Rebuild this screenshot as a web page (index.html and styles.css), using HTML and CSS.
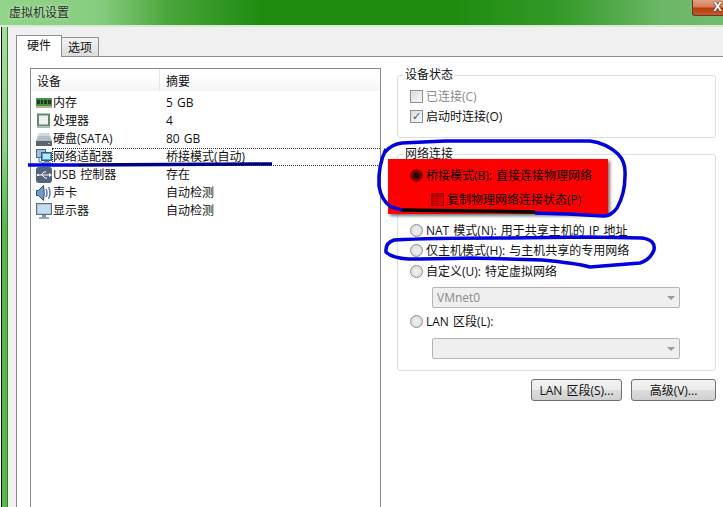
FILE: index.html
```html
<!DOCTYPE html>
<html lang="zh-CN">
<head>
  <meta charset="UTF-8" />
  <title>虚拟机设置</title>
  <link rel="stylesheet" href="styles.css">
</head>

<body>
  <div class="window">
    <div class="titlebar">
      <span class="title">虚拟机设置</span>
      <div class="close"><span>X</span></div>
    </div>

    <div class="frame">
      <div class="edge"></div>
      <div class="client">
        <div class="tabs">
          <div class="tab active">硬件</div>
          <div class="tab">选项</div>
        </div>

        <div class="panel">
          <div class="devices">
            <div class="devices-head">
              <div class="head-cell head-name">设备</div>
              <div class="head-cell">摘要</div>
            </div>

            <div class="row">
              <svg class="icon" viewBox="0 0 16 16">
                <rect x="0" y="3" width="16" height="8" fill="#4d8f4a"/>
                <rect x="1" y="5" width="3" height="4" fill="#1d3d1d"/>
                <rect x="5" y="5" width="2" height="4" fill="#1d3d1d"/>
                <rect x="8" y="5" width="3" height="4" fill="#1d3d1d"/>
                <rect x="12" y="5" width="3" height="4" fill="#1d3d1d"/>
                <rect x="0" y="11" width="16" height="2" fill="#b9b48a"/>
              </svg>
              <div class="row-body"><span class="name">内存</span><span>5 GB</span></div>
            </div>

            <div class="row">
              <svg class="icon" viewBox="0 0 16 16">
                <rect x="2" y="1.5" width="11" height="11" fill="#eef2ee" stroke="#5d8a70" stroke-width="2"/>
                <path d="M1 14.5h13" stroke="#a9b7ae"/>
              </svg>
              <div class="row-body"><span class="name">处理器</span><span>4</span></div>
            </div>

            <div class="row">
              <svg class="icon" viewBox="0 0 16 16">
                <path d="M3 2h10l3 8H0z" fill="#b4bcc4"/>
                <path d="M3 2h10l1 3H2z" fill="#d4d9de"/>
                <rect x="0" y="10" width="16" height="5" fill="#5c6670"/>
                <rect x="12" y="12" width="2" height="1" fill="#9fe08a"/>
              </svg>
              <div class="row-body"><span class="name">硬盘(SATA)</span><span>80 GB</span></div>
            </div>

            <div class="row selected">
              <svg class="icon" viewBox="0 0 16 16">
                <rect x="0.5" y="0.5" width="9" height="8" fill="#9fc0de" stroke="#4a6a8c"/>
                <path d="M3 9v4h3" stroke="#4a6a8c" fill="none"/>
                <rect x="5.5" y="3.5" width="10" height="8" fill="#35a6f0" stroke="#35597f"/>
                <rect x="7" y="5" width="7" height="5" fill="#bfe6ff"/>
                <rect x="8" y="12" width="5" height="1" fill="#5a7fa3"/>
                <rect x="6" y="13" width="9" height="2" fill="#8da8c0"/>
              </svg>
              <div class="row-body"><span class="name">网络适配器</span><span>桥接模式(自动)</span></div>
            </div>

            <div class="row">
              <svg class="icon" viewBox="0 0 16 16">
                <rect x="0" y="0" width="16" height="16" rx="3" fill="#53657c"/>
                <path d="M2 8h11M5 8l3-3h2M6 8l3 3h2" stroke="#fff" fill="none"/>
                <path d="M13 6l3 2-3 2z" fill="#fff"/>
                <rect x="1" y="7" width="2" height="2" fill="#fff"/>
              </svg>
              <div class="row-body"><span class="name">USB 控制器</span><span>存在</span></div>
            </div>

            <div class="row">
              <svg class="icon" viewBox="0 0 16 16">
                <path d="M0.5 5.5h2l5-5q1.500 7.500 0 15l-5-5h-2z" fill="#6f9ccb" stroke="#2f4f78"/>
                <path d="M10 4q2 4 0 8M12.500 2q3 6 0 12" stroke="#5f86b6" stroke-width="1.600" fill="none"/>
              </svg>
              <div class="row-body"><span class="name">声卡</span><span>自动检测</span></div>
            </div>

            <div class="row">
              <svg class="icon" viewBox="0 0 16 16">
                <rect x="0.5" y="0.5" width="15" height="11" fill="#a9c6dd" stroke="#5a6f84"/>
                <rect x="2" y="2" width="12" height="8" fill="#c6dcec"/>
                <rect x="6" y="12" width="4" height="2" fill="#7f8f9f"/>
                <rect x="3" y="14" width="10" height="2" fill="#9aa8b5"/>
              </svg>
              <div class="row-body"><span class="name">显示器</span><span>自动检测</span></div>
            </div>
          </div>

          <div class="side">
            <fieldset class="group group-status">
              <legend>设备状态</legend>
              <label class="option off"><span class="check"></span>已连接(C)</label>
              <label class="option"><span class="check checked">✓</span>启动时连接(O)</label>
            </fieldset>

            <fieldset class="group group-net">
              <legend>网络连接</legend>
              <div class="red-box">
                <label class="option"><span class="radio radio-on"></span>桥接模式(B): 直接连接物理网络</label>
                <label class="option option-sub"><span class="check check-red"></span>复制物理网络连接状态(P)</label>
              </div>
              <label class="option"><span class="radio"></span>NAT 模式(N): 用于共享主机的 IP 地址</label>
              <label class="option"><span class="radio"></span>仅主机模式(H): 与主机共享的专用网络</label>
              <label class="option option-custom"><span class="radio"></span>自定义(U): 特定虚拟网络</label>
              <div class="combo combo-net"><span>VMnet0</span><i class="arrow"></i></div>
              <label class="option option-lan"><span class="radio"></span>LAN 区段(L):</label>
              <div class="combo combo-lan"><span></span><i class="arrow"></i></div>
            </fieldset>

            <div class="buttons">
              <button class="btn btn-lan">LAN 区段(S)...</button>
              <button class="btn btn-adv">高级(V)...</button>
            </div>
          </div>
        </div>
      </div>
    </div>

    <!-- hand drawn marks on top of the screenshot -->
    <svg class="marks" viewBox="0 0 723 507">
      <path class="mark" d="M385 152Q392 144 402 143L445 141L590 141Q606 143 618 154Q626 162 625 176Q625 194 617 208Q611 216 604 216L568 214L535 213"/>
      <path class="mark" d="M386 149Q378 165 379 186Q381 200 391 207L402 210"/>
      <path class="mark-dark" d="M402 210L535 212"/>
      <path class="mark" d="M408 259Q392 258 386 252Q385 243 394 240Q430 238 500 238L590 237L642 238Q656 240 654 250Q650 260 640 263L590 267Q575 263 542 260L470 258Q430 259 408 259"/>
      <path class="mark-line" d="M28 165L78 165"/>
      <path class="mark-line mark-navy" d="M78 165L272 164"/>
    </svg>
  </div>
</body>
</html>
```

FILE: styles.css
```css
html, body {
  margin: 0;
  height: 100%;
  overflow: hidden;
  background-color: #fff;
  font-family: "Open Sans", "Noto Sans CJK SC", sans-serif;
  font-size: 12px;
  word-spacing: 1px;
  color: #111;
}

.window {
  position: relative;
  width: 723px;
  height: 507px;
  overflow: hidden;
  display: flex;
  flex-direction: column;
}

/* title bar */
.titlebar {
  height: 25px;
  flex: none;
  display: flex;
  justify-content: space-between;
  padding-left: 9px;
  background: linear-gradient(90deg, #93d48c 0, #86cc7e 100px, #4aa53a 170px, #1f8c10 260px, #1f8c10 455px, #349a28 560px, #6ab765 660px, #74ba6e 723px);
  border-bottom: 2px solid #d4ecd0;
}

.title {
  line-height: 25px;
  color: #25301f;
  text-shadow: 0 0 4px #d8f0d0;
}

.close {
  width: 31px;
  height: 16px;
  box-sizing: border-box;
  border: 1px solid #5e3a30;
  border-top: none;
  border-right: none;
  border-radius: 0 0 0 3px;
  background: linear-gradient(#e4a084 0, #d48058 45%, #b83c0c 55%, #c85a28 100%);
  text-align: right;
  padding-right: 1px;
}

.close span {
  display: block;
  font-family: "Liberation Sans", sans-serif;
  font-size: 13px;
  font-weight: bold;
  line-height: 14px;
  color: #fff;
  text-shadow: 0 0 1px #333, 0 0 2px #333;
}

.frame {
  flex: 1;
  display: flex;
  min-height: 0;
}

.edge {
  width: 7px;
  margin-left: 1px;
  flex: none;
  box-sizing: border-box;
  border-left: 1px solid #111;
  border-right: 1px solid #2f7f2a;
  background: linear-gradient(#a8dca0 0, #8fd088 120px, #58b84e 200px, #58b84e 480px);
}

.client {
  flex: 1;
  min-width: 0;
  background-color: #f0f0f0;
  padding: 7px 0 0 8px;
  display: flex;
  flex-direction: column;
}

/* tabs */
.tabs {
  display: flex;
  align-items: flex-end;
  height: 22px;
  flex: none;
}

.tab {
  width: 37px;
  height: 19px;
  line-height: 19px;
  text-align: center;
  box-sizing: border-box;
  border: 1px solid #8a8f94;
  border-left: none;
  border-bottom: none;
  background: linear-gradient(#f4f4f4, #dcdcdc);
}

.tab.active {
  width: 46px;
  height: 22px;
  line-height: 19px;
  border-left: 1px solid #8a8f94;
  background: #fff;
  margin-bottom: -1px;
  position: relative;
}

.panel {
  flex: 1;
  min-height: 0;
  background-color: #fff;
  border-left: 1px solid #8a8f94;
  border-top: 1px solid #8a8f94;
  padding: 11px 0 0 13px;
  display: flex;
  gap: 16px;
}

/* device list */
.devices {
  width: 351px;
  flex: none;
  box-sizing: border-box;
  border: 1px solid #868c92;
  border-bottom: none;
  margin-bottom: -20px;
}

.devices-head {
  display: flex;
  height: 22px;
  margin-bottom: 3px;
  background: linear-gradient(#fff 35%, #f3f4f6);
  line-height: 26px;
}

.head-cell {
  padding-left: 6px;
}

.head-name {
  width: 122px;
  border-right: 1px solid #e4e6e8;
}

.row {
  display: flex;
  align-items: center;
  height: 18px;
  padding-left: 5px;
}

.icon {
  width: 16px;
  height: 16px;
  flex: none;
}

.row-body {
  flex: 1;
  display: flex;
  align-items: center;
  height: 18px;
  box-sizing: border-box;
  border: 1px solid transparent;
  border-right: none;
  line-height: 16px;
}

.selected .row-body {
  border: 1px dotted #333;
  border-right: none;
}

.name {
  width: 113px;
  flex: none;
}

/* right column */
.side {
  width: 319px;
  flex: none;
}

.group {
  margin: 0;
  padding: 0;
  min-width: 0;
  box-sizing: border-box;
  border: 1px solid #d5dfe5;
  border-radius: 3px;
}

.group legend {
  margin-left: 5px;
  padding: 0 2px;
  line-height: 14px;
}

.group-status {
  height: 70px;
  padding-top: 4px;
}

.group-net {
  height: 224px;
  margin-top: 9px;
}

.option {
  display: flex;
  align-items: center;
  gap: 3px;
  height: 20px;
  padding-left: 12px;
}

.off {
  color: #8a8a8a;
}

.red-box {
  width: 220px;
  height: 55px;
  margin: -2px 0 6px -10px;
  padding: 6px 0 0 10px;
  box-sizing: border-box;
  background-color: #f00;
  box-shadow: 2px 2px 3px rgba(0, 0, 0, 0.55);
  color: #000;
  position: relative;
}

.red-box .option {
  margin-bottom: 4px;
}

.option-sub {
  padding-left: 33px;
}

.option-custom {
  margin-top: 1px;
}

.option-lan {
  margin-top: 3px;
}

.check {
  width: 11px;
  height: 11px;
  flex: none;
  border: 1px solid #8e8f8f;
  background: linear-gradient(135deg, #dcdcdc, #f8f8f8);
  font-size: 11px;
  line-height: 11px;
  text-align: center;
  color: #3d5a94;
  font-family: "DejaVu Sans", sans-serif;
}

.check-red {
  border-color: #800;
  background: linear-gradient(135deg, #a00, #e00);
}

.radio {
  width: 11px;
  height: 11px;
  flex: none;
  border: 1px solid #8e8f8f;
  border-radius: 50%;
  background: radial-gradient(circle, #ececec 30%, #cfcfcf 100%);
}

.radio-on {
  border-color: #800;
  background: radial-gradient(circle, #111 30%, #700 45%, #c00 100%);
}

.combo {
  width: 248px;
  height: 21px;
  margin-left: 34px;
  box-sizing: border-box;
  border: 1px solid #b5b5b5;
  border-radius: 2px;
  background-color: #efefef;
  display: flex;
  align-items: center;
  justify-content: space-between;
  padding: 0 4px;
  color: #8a8a8a;
}

.combo-net {
  margin-top: 6px;
}

.combo-lan {
  margin-top: 7px;
}

.arrow {
  width: 0;
  height: 0;
  border-left: 4px solid transparent;
  border-right: 4px solid transparent;
  border-top: 4px solid #999;
}

.buttons {
  display: flex;
  justify-content: flex-end;
  gap: 9px;
  margin-top: 8px;
}

.btn {
  height: 22px;
  padding: 0;
  font: inherit;
  word-spacing: inherit;
  color: #111;
  border: 1px solid #707070;
  border-radius: 3px;
  background: linear-gradient(#f2f2f2 0, #ebebeb 48%, #dcdcdc 52%, #cfcfcf 100%);
}

.btn-lan {
  width: 91px;
}

.btn-adv {
  width: 85px;
}

/* annotations */
.marks {
  position: absolute;
  left: 0;
  top: 0;
  width: 723px;
  height: 507px;
  pointer-events: none;
}

.mark, .mark-dark, .mark-line {
  fill: none;
  stroke: #0000e0;
  stroke-width: 3.5;
}

.mark-dark {
  stroke: #000;
}

.mark-navy {
  stroke: #000080;
}
```
